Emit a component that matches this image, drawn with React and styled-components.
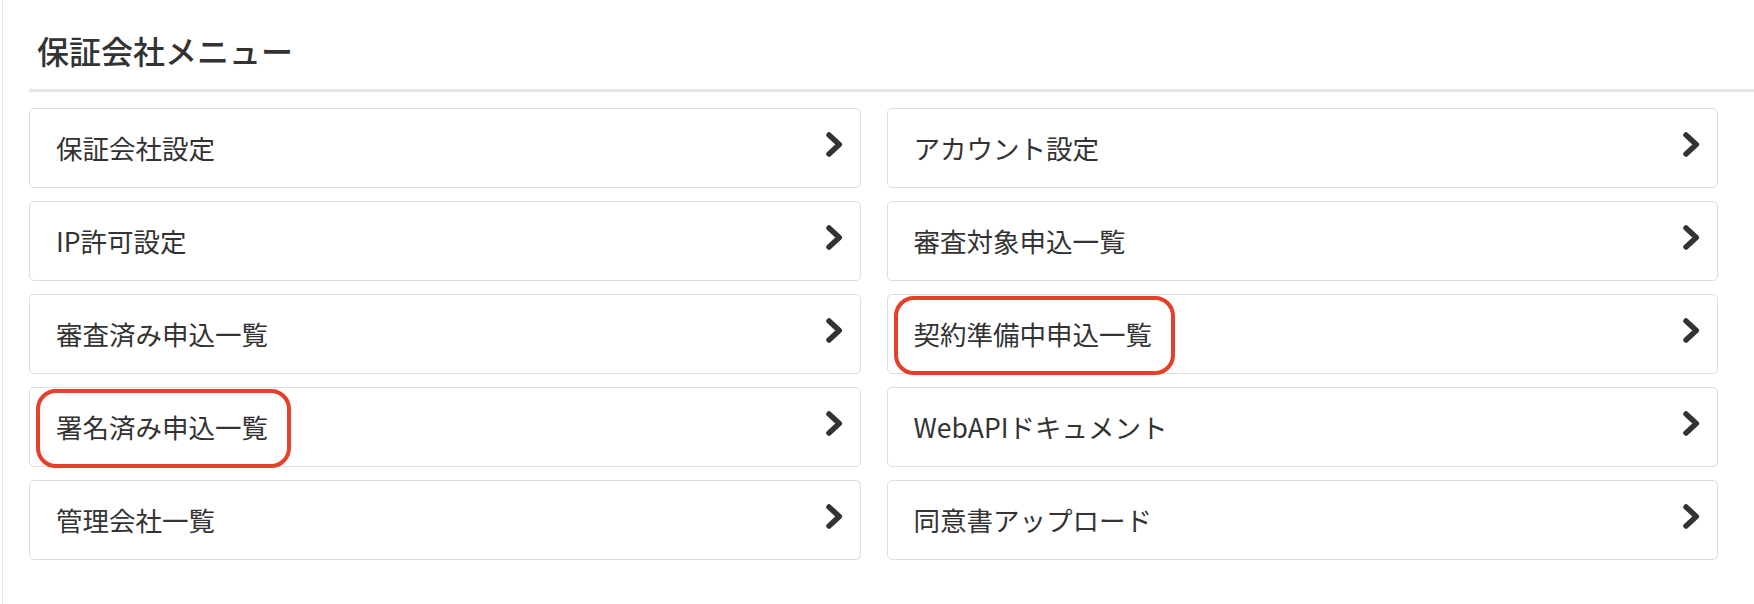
import React from 'react'
import styled, { createGlobalStyle } from 'styled-components'

const GlobalStyle = createGlobalStyle`
    html, body {
        margin: 0;
        padding: 0;
        background: #fff;
        overflow: hidden;
    }
    body {
        font-family: "Noto Sans CJK JP", "Noto Sans", sans-serif;
        color: #333;
    }
`;

const Page = styled.div`
    margin-left: 2px;
    border-left: 1px solid #e6e6eb;
    min-height: 100vh;
    padding-left: 26px;
    box-sizing: border-box;
`;

const Header = styled.h2`
    margin: 0;
    padding: 31px 0 20px 8px;
    border-bottom: 3px solid #e6e6ea;
    font-size: 32px;
    line-height: 38px;
    font-weight: 500;
    color: #333;
`;

const MenuGrid = styled.div`
    display: grid;
    grid-template-columns: 1fr 1fr;
    column-gap: 26px;
    row-gap: 13px;
    margin: 16px 36px 0 0;
`;

const MenuCard = styled.a`
    height: 80px;
    box-sizing: border-box;
    border: 1px solid #ddd;
    border-radius: 5px;
    display: flex;
    align-items: center;
    justify-content: space-between;
    padding: 0 17px 0 26px;
    font-size: 26.5px;
    color: #333;
    text-decoration: none;
    background: #fff;
`;

const Label = styled.span`
    display: inline-block;
    line-height: 1;
    position: relative;

    ${props => props.$marked && `
        &::after {
            content: '';
            position: absolute;
            top: -25px;
            bottom: -28px;
            left: -20px;
            right: -23px;
            border: 4px solid #e4412a;
            border-radius: 20px;
        }
    `}
`;

const Chevron = styled.svg`
    width: 17px;
    height: 25px;
    margin-bottom: 8px;
    flex-shrink: 0;
`;

const items = [
    { label: '保証会社設定' },
    { label: 'アカウント設定' },
    { label: 'IP許可設定' },
    { label: '審査対象申込一覧' },
    { label: '審査済み申込一覧' },
    { label: '契約準備中申込一覧', marked: true },
    { label: '署名済み申込一覧', marked: true },
    { label: 'WebAPIドキュメント' },
    { label: '管理会社一覧' },
    { label: '同意書アップロード' },
]

function ChevronIcon() {
    return (
        <Chevron viewBox="0 0 17 25">
            <polyline points="3,3 13.3,12.5 3,22" fill="none" stroke="#333" strokeWidth="5.5" strokeLinecap="round" strokeLinejoin="round" />
        </Chevron>
    )
}

export default function App() {
    return (
        <Page>
            <GlobalStyle />
            <Header>保証会社メニュー</Header>
            <MenuGrid>
                {items.map(item => (
                    <MenuCard key={item.label} href="#">
                        <Label $marked={item.marked}>{item.label}</Label>
                        <ChevronIcon />
                    </MenuCard>
                ))}
            </MenuGrid>
        </Page>
    )
}
